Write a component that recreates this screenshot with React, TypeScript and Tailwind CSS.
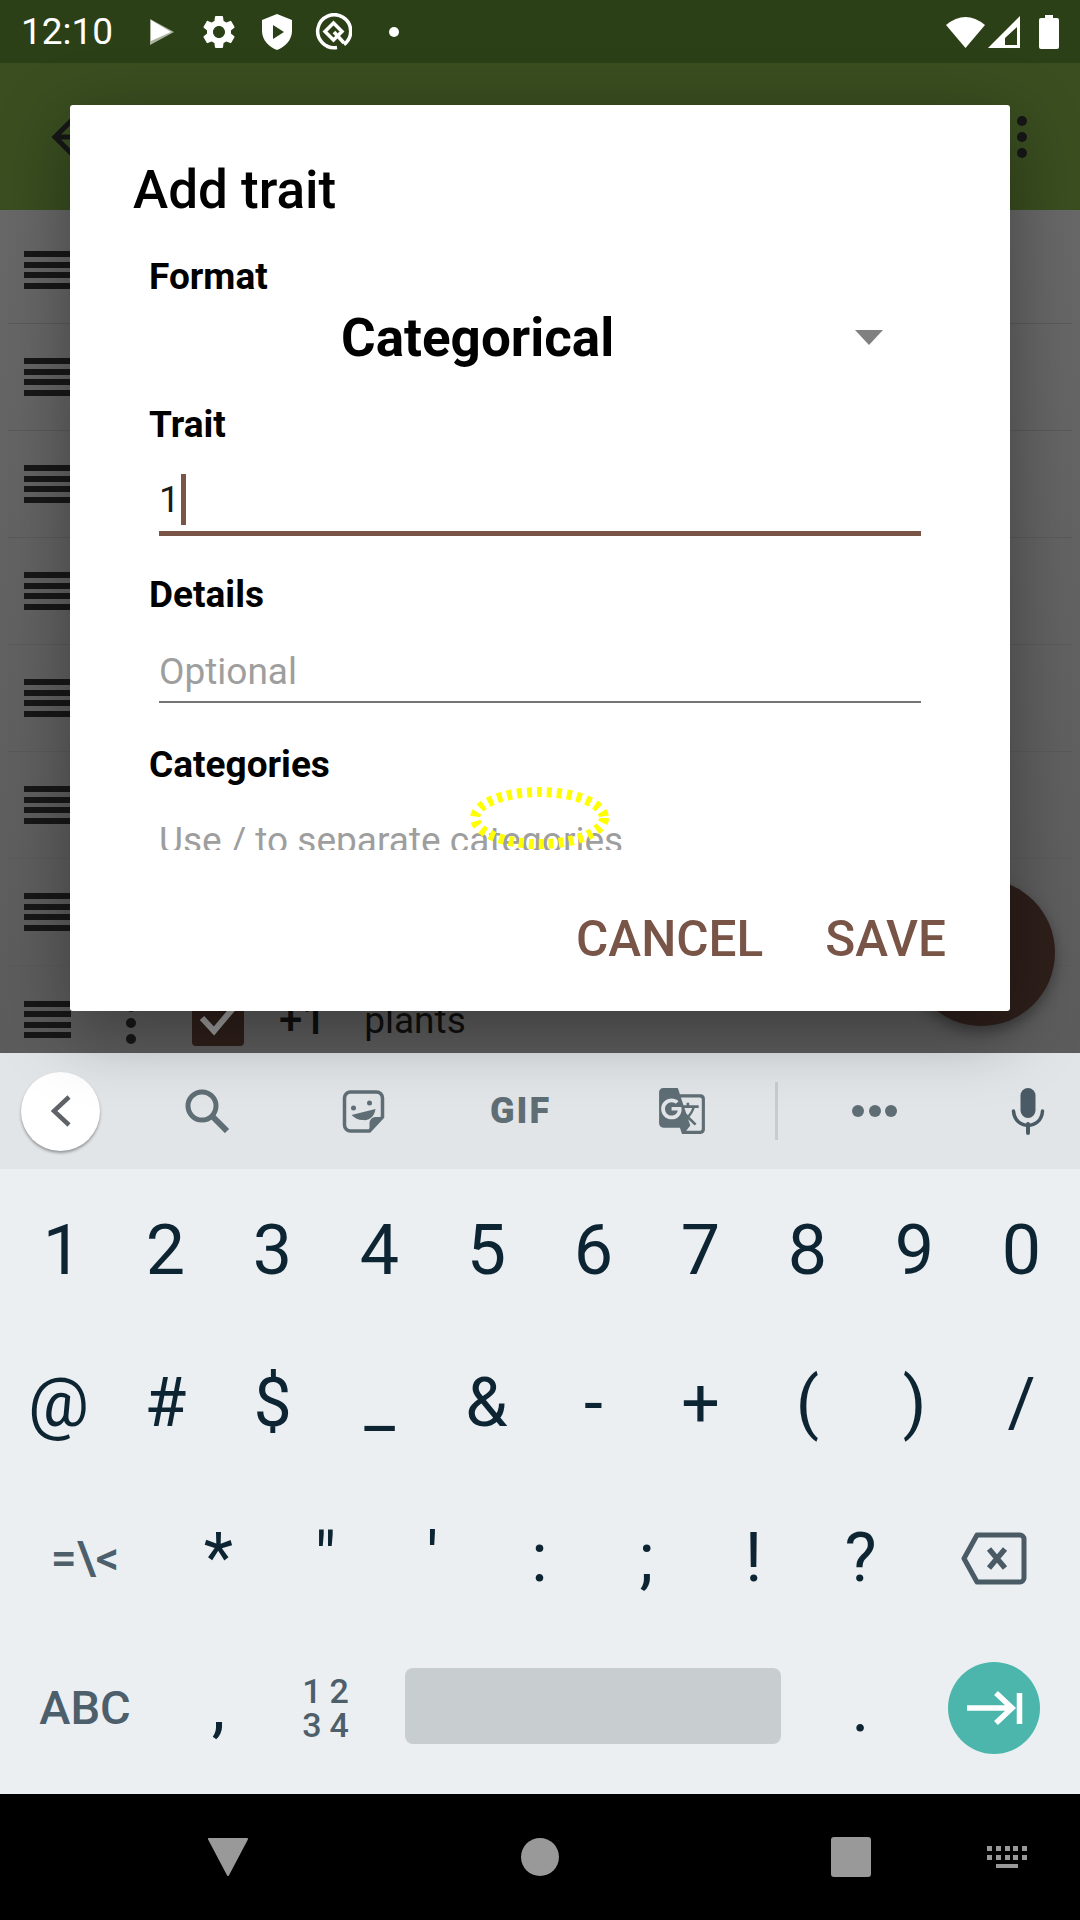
import { MdGTranslate, MdSettings } from "react-icons/md";

const numberKeys = ["1", "2", "3", "4", "5", "6", "7", "8", "9", "0"];
const symbolKeys = ["@", "#", "$", "_", "&", "-", "+", "(", ")", "/"];
const thirdRowKeys = ["*", '"', "'", ":", ";", "!", "?"];
const listRows = [1, 2, 3, 4, 5, 6, 7];

function Hamburger() {
  return (
    <div className="flex flex-col gap-[4.5px] w-[47px] shrink-0">
      <div className="h-[6px] bg-[#171717]" />
      <div className="h-[6px] bg-[#171717]" />
      <div className="h-[6px] bg-[#171717]" />
      <div className="h-[6px] bg-[#171717]" />
    </div>
  );
}

function StatusBar() {
  return (
    <div className="h-[63px] shrink-0 bg-[#2c4018] flex items-center text-white">
      <span className="ml-[21px] text-[37px] leading-[63px] w-[92px]">12:10</span>
      <svg className="ml-[37px]" width="24" height="26" viewBox="0 0 24 26">
        <path d="M0 0 L24 13 L0 26 Z" fill="#aab3a0" />
        <path d="M1 1 L21 13 L1 22 Z" fill="#ffffff" />
      </svg>
      <MdSettings className="ml-[25px]" size={40} />
      <svg className="ml-[23px]" width="30" height="36" viewBox="0 0 30 36">
        <path
          fillRule="evenodd"
          fill="#ffffff"
          d="M15 0 L30 6 V17 C30 26 23 33 15 36 C7 33 0 26 0 17 V6 Z M11 11 L22 18 L11 25 Z"
        />
      </svg>
      <svg className="ml-[23px]" width="37" height="37" viewBox="0 0 37 37" fill="none" stroke="#ffffff">
        <path d="M29 31.5 A16.5 16.5 0 1 0 22 34.5" strokeWidth="3.5" />
        <path d="M18.5 10 L27 18.5 L18.5 27 L10 18.5 Z" strokeWidth="3.5" />
        <path d="M19 19 L29 30" strokeWidth="3.5" />
      </svg>
      <div className="ml-[37px] w-[10px] h-[10px] rounded-full bg-white" />
      <svg className="ml-auto" width="39" height="32" viewBox="0 0 39 32">
        <path d="M0 9 Q19.5 -7 39 9 L19.5 32 Z" fill="#ffffff" />
      </svg>
      <svg className="ml-[3px]" width="32" height="32" viewBox="0 0 32 32">
        <path fillRule="evenodd" fill="#ffffff" d="M32 0 V32 H0 Z M17 22 V29 H29 V11 Z" />
      </svg>
      <svg className="ml-[19px] mr-[21px]" width="20" height="34" viewBox="0 0 20 34">
        <path
          fill="#ffffff"
          d="M6 0 H14 V3 H18 a2 2 0 0 1 2 2 V32 a2 2 0 0 1 -2 2 H2 a2 2 0 0 1 -2 -2 V5 a2 2 0 0 1 2 -2 H6 Z"
        />
      </svg>
    </div>
  );
}

function AppBar() {
  return (
    <div className="h-[147px] shrink-0 bg-[#3a4e20] flex items-center">
      <svg className="ml-[50px]" width="42" height="42" viewBox="0 0 42 42" fill="none" stroke="#171717" strokeWidth="5">
        <path d="M40 21 H6" />
        <path d="M22 4 L5 21 L22 38" />
      </svg>
      <div className="ml-auto mr-[53px] flex flex-col gap-[6px]">
        <div className="w-[10px] h-[10px] rounded-full bg-[#171717]" />
        <div className="w-[10px] h-[10px] rounded-full bg-[#171717]" />
        <div className="w-[10px] h-[10px] rounded-full bg-[#171717]" />
      </div>
    </div>
  );
}

function TraitList() {
  return (
    <div className="relative h-[843px] shrink-0 overflow-hidden bg-gradient-to-b from-[#686868] to-[#5c5c5c] pt-[7px]">
      {listRows.map((row) => (
        <div key={row} className="h-[107px] mx-[8px] border-b border-[#5a5a5a] flex items-center pl-[16px]">
          <Hamburger />
        </div>
      ))}
      <div className="h-[107px] mx-[8px] flex items-center pl-[16px]">
        <Hamburger />
        <svg className="ml-[54px] mt-[13px]" width="12" height="50" viewBox="0 0 12 50" fill="#171717">
          <circle cx="6" cy="6" r="5" />
          <circle cx="6" cy="22" r="5" />
          <circle cx="6" cy="38" r="5" />
        </svg>
        <svg className="ml-[55px]" width="52" height="52" viewBox="0 0 52 52">
          <rect width="52" height="52" rx="4" fill="#2e1f1a" />
          <path d="M10 24 L22 37 L43 12" fill="none" stroke="#9a9a9a" strokeWidth="6" />
        </svg>
        <span className="ml-[35px] text-[42px] leading-[50px] font-medium text-[#0f0f0f]">+1</span>
        <span className="ml-[38px] mt-[2px] text-[37px] leading-[50px] text-[#0f0f0f]">plants</span>
      </div>
      {/* fab */}
      <div className="absolute left-[908px] top-[669px] w-[147px] h-[147px] rounded-full bg-[#2e1f1a] shadow-[0_6px_14px_rgba(0,0,0,0.35)]" />
    </div>
  );
}

function FieldLabel({ text, className }: { text: string; className?: string }) {
  return <div className={`ml-[79px] h-[44px] text-[37px] leading-[44px] font-bold text-black ${className ?? ""}`}>{text}</div>;
}

function AddTraitDialog() {
  return (
    <div className="absolute left-[70px] top-[105px] w-[940px] h-[906px] rounded-[3px] bg-white shadow-[0_20px_70px_rgba(0,0,0,0.35)] flex flex-col">
      <h2 className="ml-[63px] mt-[55px] text-[53px] leading-[60px] font-medium text-black">Add trait</h2>
      <div className="relative mt-[35px] h-[595px] shrink-0 overflow-hidden">
        <FieldLabel text="Format" />
        <div className="h-[78px] flex items-center">
          <span className="ml-[271px] text-[53px] leading-[60px] font-bold text-black">Categorical</span>
          <div className="ml-[241px] mb-[2px] w-0 h-0 border-x-[14px] border-x-transparent border-t-[15px] border-t-[#808080]" />
        </div>
        <FieldLabel text="Trait" className="mt-[26px]" />
        <div className="ml-[89px] w-[762px] h-[89px] border-b-[5px] border-[#795548] flex items-end pb-[6px]">
          <span className="text-[37px] leading-[51px] text-[#1a1a1a]">1</span>
          <div className="ml-[1px] w-[5px] h-[51px] bg-[#795548]" />
        </div>
        <FieldLabel text="Details" className="mt-[37px]" />
        <div className="ml-[89px] w-[762px] h-[86px] border-b-2 border-[#757575] flex items-end pb-[4px]">
          <span className="text-[37px] leading-[50px] text-[#9e9e9e]">Optional</span>
        </div>
        <FieldLabel text="Categories" className="mt-[40px]" />
        <div className="ml-[89px] mt-[29px] text-[37px] leading-[50px] text-[#9e9e9e]">Use / to separate categories</div>
        <svg className="absolute left-[400px] top-[532px]" width="140" height="64" viewBox="0 0 140 64" fill="none">
          <ellipse cx="69.5" cy="31" rx="64.5" ry="26" stroke="#ffff00" strokeWidth="10" strokeDasharray="5 5" />
        </svg>
      </div>
      <div className="mt-[59px] flex justify-end gap-[62px] pr-[64px] text-[49.5px] leading-[60px] font-medium text-[#795548]">
        <span>CANCEL</span>
        <span>SAVE</span>
      </div>
    </div>
  );
}

function SuggestionBar() {
  return (
    <div className="h-[116px] shrink-0 bg-[#e1e5e8] flex items-center">
      <div className="ml-[21px] w-[79px] h-[79px] rounded-full bg-white shadow-[0_2px_3px_rgba(0,0,0,0.35)] flex items-center justify-center">
        <svg width="20" height="32" viewBox="0 0 20 32" fill="none" stroke="#5f6368" strokeWidth="4.5">
          <path d="M18 2 L3 16 L18 30" />
        </svg>
      </div>
      <svg className="ml-[85px]" width="45" height="44" viewBox="0 0 45 44" fill="none" stroke="#5f6d75" strokeWidth="5">
        <circle cx="17" cy="17" r="14" />
        <path d="M27 27 L42 42" strokeWidth="6" />
      </svg>
      <svg className="ml-[112px]" width="43" height="43" viewBox="0 0 42 43">
        <path d="M8 2 H34 a6 6 0 0 1 6 6 V27 L27 41 H8 a6 6 0 0 1 -6 -6 V8 a6 6 0 0 1 6 -6 Z" fill="none" stroke="#5f6d75" strokeWidth="3.5" />
        <path d="M40 27 L27 41 V33 a6 6 0 0 1 6 -6 Z" fill="#5f6d75" />
        <circle cx="11" cy="18" r="2.5" fill="#5f6d75" />
        <circle cx="27" cy="13" r="2.5" fill="#5f6d75" />
        <path d="M9 25 L33 19 C32 27 26 31 20 30 C16 30 12 28 9 25 Z" fill="#5f6d75" />
      </svg>
      <span className="ml-[105px] w-[62px] text-[36px] leading-[40px] font-black text-[#5f6d75] tracking-[2px]">GIF</span>
      <MdGTranslate className="ml-[105px] text-[#5f6d75]" size={50} />
      <div className="ml-[68px] w-[3px] h-[58px] bg-[#c8ccd0]" />
      <div className="ml-[74px] w-[45px] flex justify-between">
        <div className="w-[12px] h-[12px] rounded-full bg-[#5f6d75]" />
        <div className="w-[12px] h-[12px] rounded-full bg-[#5f6d75]" />
        <div className="w-[12px] h-[12px] rounded-full bg-[#5f6d75]" />
      </div>
      <svg className="ml-[114px]" width="34" height="47" viewBox="0 0 33 47" fill="none">
        <rect x="9" y="0" width="15" height="30" rx="7.5" fill="#4a5b65" />
        <path d="M2 23 C3 42 30 42 31 23" stroke="#4a5b65" strokeWidth="3.5" strokeLinecap="round" />
        <path d="M16.5 36 V45" stroke="#4a5b65" strokeWidth="4" strokeLinecap="round" />
      </svg>
    </div>
  );
}

function Keyboard() {
  return (
    <div className="h-[625px] shrink-0 bg-[#ebeff2] text-[#0d2433] flex flex-col">
      <div className="h-[155px] pt-[6px] px-[5px] grid grid-cols-10 items-center text-center text-[70px] leading-[80px]">
        {numberKeys.map((key) => (
          <span key={key} className={key === "1" ? "pl-[8px]" : ""}>
            {key}
          </span>
        ))}
      </div>
      <div className="h-[155px] pt-[2px] px-[5px] grid grid-cols-10 items-center text-center text-[68px] leading-[80px]">
        {symbolKeys.map((key) => (
          <span key={key}>{key}</span>
        ))}
      </div>
      <div className="h-[155px] pt-[3px] px-[5px] flex items-center text-center text-[68px] leading-[80px]">
        <span className="w-[160px] text-[46px] font-medium text-[#4d5f6b]">=\&lt;</span>
        {thirdRowKeys.map((key) => (
          <span key={key} className="w-[107px]">
            {key}
          </span>
        ))}
        <div className="w-[160px] flex justify-center">
          <svg width="66" height="53" viewBox="0 0 66 53" fill="none" stroke="#4a5b65" strokeWidth="5">
            <path d="M16 3 H59 a4 4 0 0 1 4 4 V46 a4 4 0 0 1 -4 4 H16 L3 26.5 Z" strokeLinejoin="round" />
            <path d="M28 17 L44 36 M44 17 L28 36" strokeWidth="5.5" />
          </svg>
        </div>
      </div>
      <div className="h-[148px] px-[5px] flex items-center text-center">
        <span className="w-[160px] text-[47px] leading-[60px] font-medium text-[#4d5f6b]">ABC</span>
        <span className="w-[107px] mb-[4px] text-[68px] leading-[80px]">,</span>
        <span className="w-[107px] pl-[8px] text-[34px] leading-[34px] font-medium tracking-[8px] text-[#4d5f6b]">
          12
          <br />
          34
        </span>
        <div className="w-[428px] px-[26px] mb-[4px]">
          <div className="h-[76px] rounded-[8px] bg-[#c8cdd0]" />
        </div>
        <span className="w-[107px] text-[68px] leading-[80px]">.</span>
        <div className="w-[160px] flex justify-center">
          <div className="w-[92px] h-[92px] rounded-full bg-[#4db6ac]">
            <svg width="92" height="92" viewBox="0 0 92 92" fill="none" stroke="#ffffff" strokeWidth="5.5">
              <path d="M19 46 H64" />
              <path d="M48 31 L64 46 L48 61" />
              <path d="M71.5 31 V62" />
            </svg>
          </div>
        </div>
      </div>
    </div>
  );
}

function NavBar() {
  return (
    <div className="h-[126px] shrink-0 bg-black flex items-center">
      <svg className="ml-[207px]" width="42" height="38" viewBox="0 0 42 38">
        <path d="M2 1 H40 L21 37 Z" fill="#999999" stroke="#999999" strokeWidth="2" strokeLinejoin="round" />
      </svg>
      <div className="ml-[272px] w-[38px] h-[38px] rounded-full bg-[#999999]" />
      <div className="ml-[272px] w-[40px] h-[40px] rounded-[3px] bg-[#999999]" />
      <svg className="ml-[116px]" width="40" height="22" viewBox="0 0 40 22" fill="#999999">
        <rect x="0" y="0" width="5" height="5" />
        <rect x="9" y="0" width="5" height="5" />
        <rect x="18" y="0" width="5" height="5" />
        <rect x="26" y="0" width="5" height="5" />
        <rect x="35" y="0" width="5" height="5" />
        <rect x="0" y="9" width="5" height="5" />
        <rect x="9" y="9" width="5" height="5" />
        <rect x="18" y="9" width="5" height="5" />
        <rect x="26" y="9" width="5" height="5" />
        <rect x="35" y="9" width="5" height="5" />
        <rect x="9" y="18" width="22" height="4" />
      </svg>
    </div>
  );
}

export default function App() {
  return (
    <div className="relative w-[1080px] h-[1920px] overflow-hidden flex flex-col font-['Roboto',sans-serif]">
      <StatusBar />
      <AppBar />
      <TraitList />
      <SuggestionBar />
      <Keyboard />
      <NavBar />
      <AddTraitDialog />
    </div>
  );
}
